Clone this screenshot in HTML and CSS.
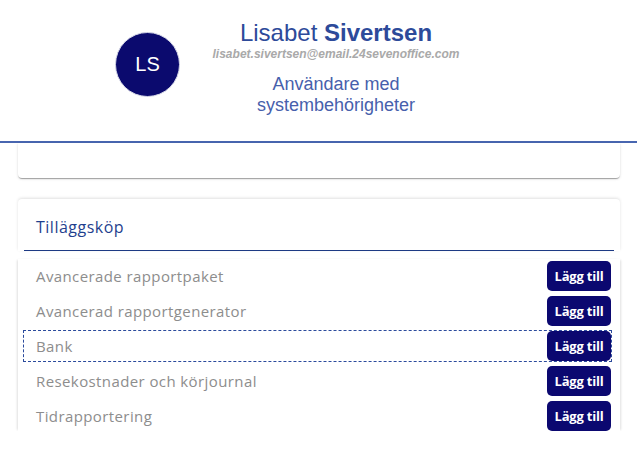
FILE: index.html
```html
<!DOCTYPE html>
<html>

<head lang="sv">
    <meta charset="UTF-8">
    <title>Tilläggsköp</title>
    <link rel="stylesheet" href="styles.css">
</head>

<body>
    <div class="profile-header">
        <div class="avatar">LS</div>
        <div class="profile-info">
            <div class="profile-name">Lisabet <b>Sivertsen</b></div>
            <div class="profile-email">lisabet.sivertsen@email.24sevenoffice.com</div>
            <div class="profile-role">Användare med systembehörigheter</div>
        </div>
    </div>
    <div class="content">
        <div class="card card-top"></div>
        <div class="card addons">
            <div class="addons-title">Tilläggsköp</div>
        </div>
        <ul class="addon-list">
            <li class="addon-row"><span>Avancerade rapportpaket</span><a class="add-btn" href="javascript:;">Lägg till</a></li>
            <li class="addon-row"><span>Avancerad rapportgenerator</span><a class="add-btn" href="javascript:;">Lägg till</a></li>
            <li class="addon-row focused"><span>Bank</span><a class="add-btn" href="javascript:;">Lägg till</a></li>
            <li class="addon-row"><span>Resekostnader och körjournal</span><a class="add-btn" href="javascript:;">Lägg till</a></li>
            <li class="addon-row"><span>Tidrapportering</span><a class="add-btn" href="javascript:;">Lägg till</a></li>
        </ul>
    </div>
</body>

</html>
```
FILE: styles.css
```css
* {
    padding: 0;
    margin: 0;
    box-sizing: border-box;
}

body {
    background: #ffffff;
    font-family: "Open Sans", Lato, sans-serif;
}

a {
    text-decoration: none;
}

.profile-header {
    display: flex;
    align-items: flex-start;
    height: 143px;
    padding: 19px 0 0 115px;
    border-bottom: 2px solid #4866b0;
    font-family: "Liberation Sans", Arial, sans-serif;
}

.avatar {
    width: 65px;
    height: 65px;
    margin-top: 13px;
    border-radius: 50%;
    background: #0b0a6e;
    border: 1px solid #d4d6e6;
    color: #ffffff;
    font-size: 20px;
    line-height: 63px;
    text-align: center;
}

.profile-info {
    width: 280px;
    margin-left: 16px;
    text-align: center;
}

.profile-name {
    font-size: 24px;
    line-height: 28px;
    color: #2d4a9a;
}

.profile-email {
    font-size: 12px;
    line-height: 14px;
    font-weight: bold;
    font-style: italic;
    color: #a9a9a9;
}

.profile-role {
    width: 220px;
    margin: 13px auto 0 auto;
    font-size: 18px;
    line-height: 21px;
    color: #4760ac;
}

.content {
    padding: 0 17px 0 18px;
}

.card {
    background: #ffffff;
    border-radius: 4px;
    box-shadow: 0 2px 1px -1px rgba(0, 0, 0, .2), 0 1px 1px 0 rgba(0, 0, 0, .14), 0 1px 3px 0 rgba(0, 0, 0, .12);
}

.card-top {
    height: 35px;
    border-radius: 0 0 4px 4px;
}

.addons {
    margin-top: 21px;
    padding: 0 6px;
    border-radius: 4px 4px 0 0;
    box-shadow: 0 -1px 3px 0 rgba(0, 0, 0, .12);
}

.addons-title {
    padding: 18px 12px 13px 12px;
    line-height: 20px;
    font-size: 16px;
    letter-spacing: .5px;
    color: #1f3f8e;
    border-bottom: 1px solid #1d3a84;
}

.addon-list {
    list-style: none;
    margin-top: 8px;
    padding: 2px 9px 0 6px;
    box-shadow: -2px 0 2px -1px rgba(0, 0, 0, .12), 2px 0 2px -1px rgba(0, 0, 0, .12);
}

.addon-row {
    display: flex;
    align-items: center;
    justify-content: space-between;
    height: 30px;
    margin-bottom: 5px;
    padding-left: 12px;
    font-size: 15px;
    letter-spacing: .4px;
    color: #8d8d8d;
}

.addon-row:last-child {
    margin-bottom: 0;
}

.focused {
    outline: 1px dashed #2b4a9c;
}

.add-btn {
    display: block;
    width: 64px;
    height: 30px;
    border-radius: 5px;
    background: #0b0870;
    color: #ffffff;
    font-size: 13px;
    font-weight: bold;
    letter-spacing: -.2px;
    line-height: 30px;
    text-align: center;
}
```
